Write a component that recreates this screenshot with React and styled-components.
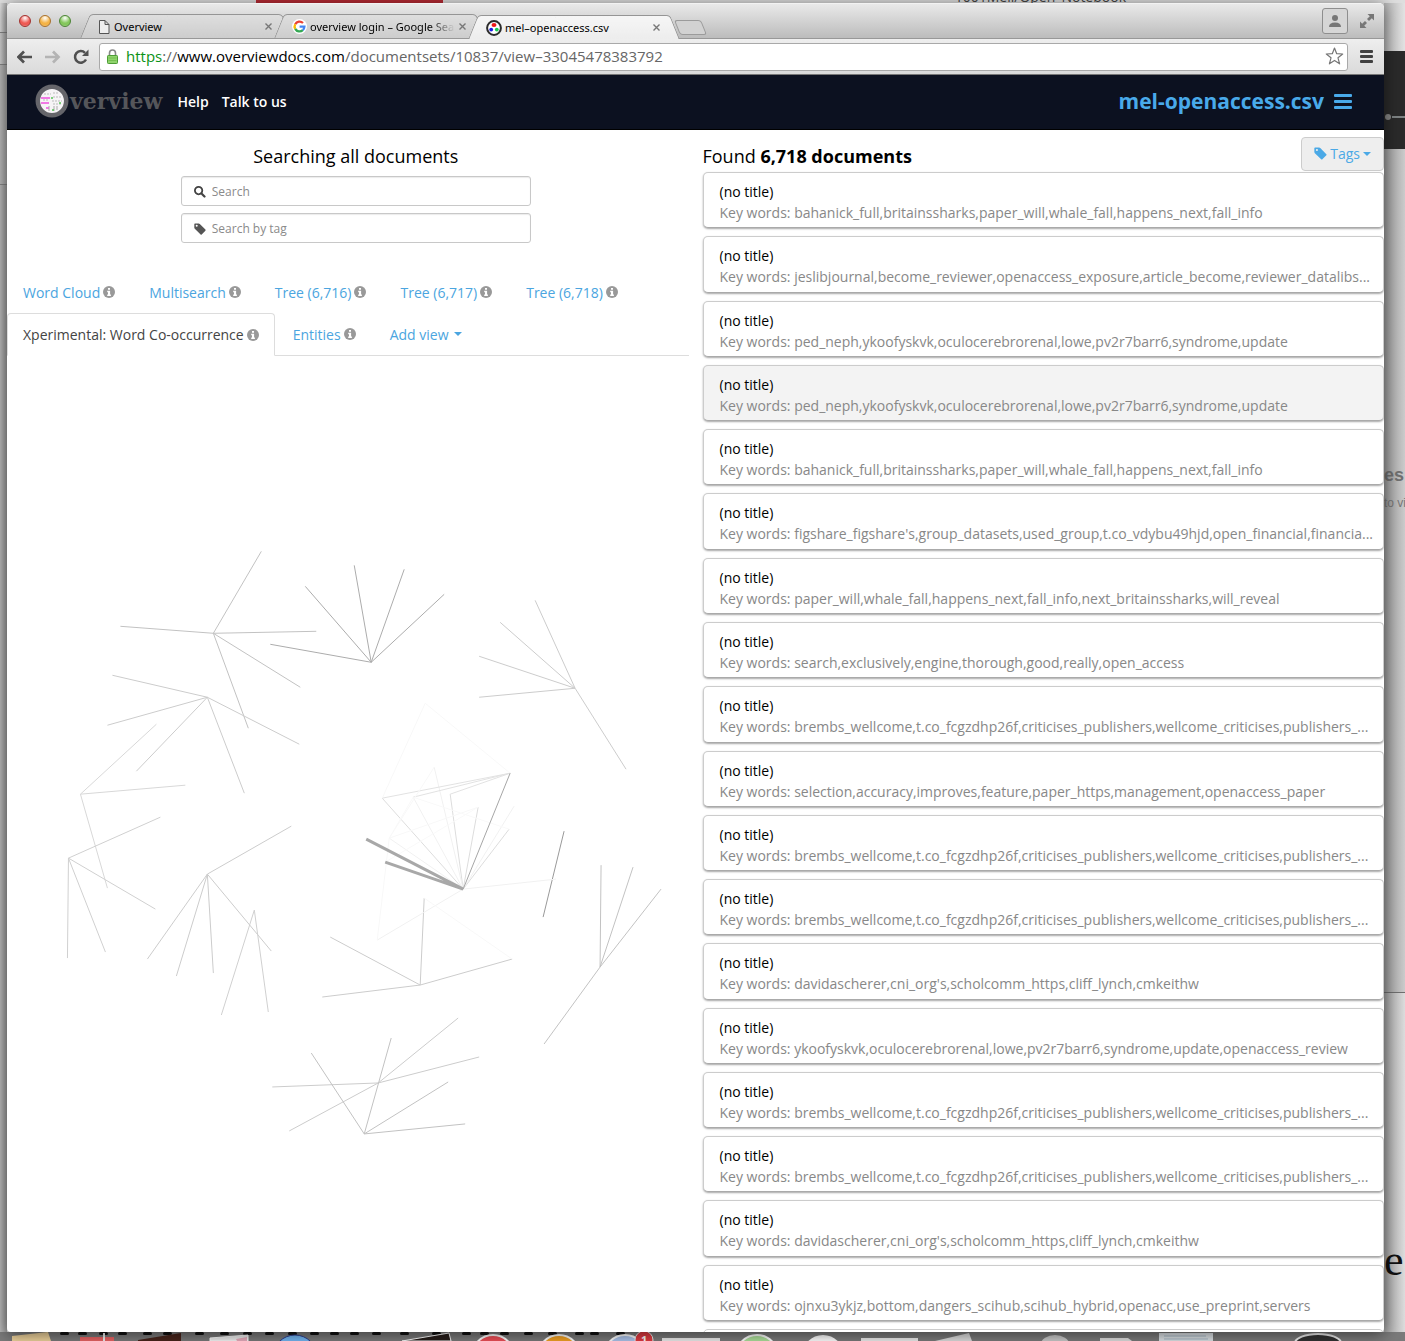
import React from "react";
import styled, { createGlobalStyle, css } from "styled-components";

const GlobalStyle = createGlobalStyle`
  *, *::before, *::after { box-sizing: border-box; }
  body { margin: 0; font: 14px/21px "Open Sans", "Noto Sans", sans-serif; color: #000; }
  h1, h2, h3, p, ul { margin: 0; padding: 0; }
  ul { list-style: none; }
  button { font: inherit; cursor: pointer; }
  a { text-decoration: none; }
`;

const Desktop = styled.div`
  height: 100vh;
  overflow: hidden;
  display: grid;
  grid-template-columns: 7px minmax(0, 1fr) 21px;
  grid-template-rows: 3px minmax(0, 1fr) 9px;
  background: #dcdcdc;
`;

const TopStrip = styled.div`
  grid-column: 1 / -1;
  display: flex;
  align-items: flex-end;
  overflow: hidden;
  background: #dedede;
`;
const RedTab = styled.div`
  width: 187px;
  height: 3px;
  margin-left: 256px;
  background: #b92b35;
`;
const ClippedName = styled.span`
  margin-left: auto;
  margin-right: 279px;
  font-size: 14px;
  line-height: 12px;
  color: #444;
`;

const LeftStrip = styled.div`
  display: flex;
  flex-direction: column;
  background: linear-gradient(90deg, #b8b8b8, #9c9c9c);
`;
const LeftPiece = styled.div`
  height: ${(p) => p.$h}px;
  background: linear-gradient(90deg, ${(p) => p.$c}, #a6a6a6);
  border-bottom: 1px solid #858585;
`;

const RightStrip = styled.div`
  display: flex;
  flex-direction: column;
  overflow: hidden;
`;
const RightPiece = styled.div`
  display: flex;
  flex-direction: column;
  height: ${(p) => p.$h}px;
  flex: ${(p) => (p.$h ? "none" : "1")};
  padding-top: ${(p) => p.$pad || 0}px;
  overflow: hidden;
  background: ${(p) => p.$bg};
  border-bottom: ${(p) => (p.$line ? "1px solid #6e6e6e" : "0")};
`;
const Behind = styled.div`
  flex: none;
  white-space: nowrap;
  color: ${(p) => p.$color};
  font: ${(p) => p.$font};
`;
const SliderTrack = styled.div`
  display: flex;
  align-items: center;
  &::before { content: ""; width: 6px; height: 6px; margin-left: 1px; border-radius: 50%; background: #858585; }
  &::after { content: ""; flex: 1; height: 2px; margin-left: 1px; background: #7d8283; }
`;

const Dock = styled.div`
  grid-column: 1 / -1;
  display: flex;
  background: #7a7a7a;
  svg { display: block; flex: none; }
`;

const Window = styled.div`
  display: flex;
  flex-direction: column;
  min-width: 0;
  overflow: hidden;
  border-radius: 5px 5px 4px 4px;
  background: #fff;
  box-shadow: 0 2px 16px rgba(0, 0, 0, 0.55);
  z-index: 1;
`;

/* ---- browser chrome ---- */
const TitleBar = styled.div`
  display: flex;
  align-items: flex-end;
  height: 36px;
  flex: none;
  padding: 0 10px 0 12px;
  border-top: 1px solid #f2f2f2;
  border-bottom: 1px solid #989898;
  background: linear-gradient(#e9e9e9, #bcbcbc);
`;
const Lights = styled.div`
  display: flex;
  gap: 8px;
  align-self: center;
  margin-right: 18px;
`;
const Light = styled.button`
  width: 12px;
  height: 12px;
  padding: 0;
  border: 1px solid ${(p) => p.$edge};
  border-radius: 50%;
  background: radial-gradient(circle at 50% 20%, #fff 0, ${(p) => p.$fill} 55%, ${(p) => p.$fill} 75%, #fff8 100%);
`;
const BrowserTab = styled.div`
  position: relative;
  display: flex;
  align-items: center;
  gap: 3px;
  width: 194px;
  height: 24px;
  margin-bottom: ${(p) => (p.$active ? "-1px" : "0")};
  padding: 1px 10px 0 9px;
  font: 11px/16px "Noto Sans", "Open Sans", sans-serif;
  color: #000;
  z-index: ${(p) => (p.$active ? 1 : 0)};
  &::before, &::after {
    content: "";
    position: absolute;
    z-index: -1;
    top: 0;
    bottom: 0;
    border-top: 1px solid #959595;
    background: ${(p) => (p.$active ? "linear-gradient(#f6f6f6, #ededed)" : "linear-gradient(#dedede, #cdcdcd)")};
  }
  &::before {
    left: -4px;
    width: 60%;
    border-left: 1px solid #959595;
    border-top-left-radius: 4px;
    transform: skewX(-22deg);
  }
  &::after {
    right: -4px;
    width: 60%;
    border-right: 1px solid #959595;
    border-top-right-radius: 4px;
    transform: skewX(22deg);
  }
  svg { flex: none; }
`;
const TabTitle = styled.span`
  flex: 1;
  overflow: hidden;
  white-space: nowrap;
  mask-image: ${(p) => (p.$fade ? "linear-gradient(90deg, #000 82%, transparent)" : "none")};
`;
const TabClose = styled.button`
  width: 9px;
  height: 9px;
  padding: 0;
  border: 0;
  background: none;
  display: grid;
  place-items: center;
`;
const NewTab = styled.button`
  width: 27px;
  height: 15px;
  margin: 0 0 3px 6px;
  border: 1px solid #9b9b9b;
  border-radius: 3px;
  background: #d2d2d2;
  transform: skewX(22deg);
`;
const TitleActions = styled.div`
  display: flex;
  align-items: center;
  gap: 12px;
  align-self: center;
  margin-left: auto;
`;
const Profile = styled.button`
  display: grid;
  place-items: center;
  width: 26px;
  height: 26px;
  padding: 0;
  border: 1px solid #8e8e8e;
  border-radius: 3px;
  background: #d6d6d6;
`;
const PlainButton = styled.button`
  display: grid;
  place-items: center;
  padding: 0;
  border: 0;
  background: none;
`;
const Toolbar = styled.div`
  display: flex;
  align-items: center;
  gap: 12px;
  height: 36px;
  flex: none;
  padding: 0 11px 0 10px;
  border-bottom: 1px solid #777;
  background: linear-gradient(#eee, #dadada);
`;
const AddressBar = styled.div`
  display: flex;
  align-items: center;
  gap: 8px;
  flex: 1;
  height: 28px;
  margin-left: -3px;
  padding: 0 3px 1px 7px;
  border: 1px solid #a9a9a9;
  border-radius: 3px;
  background: #fff;
  font-size: 15px;
  line-height: 20px;
  color: #666;
  b { font-weight: 400; color: #000; }
  i { font-style: normal; color: #0b9216; }
`;
const Url = styled.span`
  flex: 1;
  overflow: hidden;
  white-space: nowrap;
`;

/* ---- site header ---- */
const SiteHeader = styled.header`
  display: flex;
  align-items: center;
  height: 55px;
  flex: none;
  padding: 0 32px 2px 28px;
  border-bottom: 1px solid #000;
  background: #0c1120;
`;
const Logo = styled.a`
  display: flex;
  align-items: center;
  gap: 1px;
  margin-right: 15px;
  font: bold 22px/26px "DejaVu Serif", "Liberation Serif", serif;
  color: #55565a;
`;
const HeaderLink = styled.a`
  margin-right: 13px;
  color: #fff;
  font-weight: 600;
`;
const SetTitle = styled.h1`
  margin-left: auto;
  font-size: 21px;
  line-height: 28px;
  color: #49aaea;
`;
const MenuButton = styled(PlainButton)`
  margin-left: 10px;
`;

/* ---- page panes ---- */
const Page = styled.main`
  display: grid;
  grid-template-columns: minmax(0, 1fr) minmax(0, 1fr);
  column-gap: 14px;
  flex: 1;
  min-height: 0;
`;
const LeftPane = styled.section`
  display: flex;
  flex-direction: column;
  min-height: 0;
`;
const SearchArea = styled.form`
  display: flex;
  flex-direction: column;
  align-items: center;
  gap: 7px;
  padding: 14px 0 28px 16px;
`;
const Heading = styled.h2`
  font-size: 18px;
  line-height: 25px;
  font-weight: 400;
`;
const Field = styled.label`
  display: flex;
  align-items: center;
  gap: 6px;
  width: 350px;
  height: 30px;
  padding: 2px 12px 0;
  border: 1px solid #c8c8c8;
  border-radius: 3px;
  box-shadow: inset 0 1px 1px rgba(0, 0, 0, 0.08);
  color: #555;
`;
const FieldInput = styled.input`
  flex: 1;
  min-width: 0;
  padding: 0;
  border: 0;
  outline: 0;
  background: none;
  font: 12px/18px "Open Sans", "Noto Sans", sans-serif;
  &::placeholder { color: #8a8a8a; opacity: 1; }
`;
const ViewTabs = styled.nav`
  display: flex;
  flex-wrap: wrap;
  column-gap: 2px;
  border-bottom: 1px solid #ddd;
`;
const viewTab = css`
  display: flex;
  align-items: center;
  gap: 3px;
  height: 42px;
  padding: 0 15px;
  border: 1px solid transparent;
  background: none;
  color: #4ba5e0;
`;
const ViewTab = styled.a`
  ${viewTab}
  ${(p) =>
    p.$active &&
    css`
      height: 43px;
      margin-bottom: -1px;
      border-color: #ddd;
      border-bottom-color: #fff;
      border-radius: 4px 4px 0 0;
      background: #fff;
      color: #444;
    `}
`;
const AddView = styled.button`
  ${viewTab}
  gap: 5px;
`;
const Caret = styled.span`
  border: 4px solid transparent;
  border-top-color: currentColor;
  border-bottom: 0;
`;
const Graph = styled.svg`
  display: block;
  flex: 1;
  width: 100%;
  min-height: 0;
`;
const RightPane = styled.section`
  display: flex;
  flex-direction: column;
  min-height: 0;
`;
const ResultsHeader = styled.div`
  display: flex;
  align-items: flex-start;
  justify-content: space-between;
  height: 42px;
  flex: none;
  padding-top: 7px;
  ${Heading} { margin-top: 7px; }
`;
const TagsButton = styled.button`
  display: flex;
  align-items: center;
  gap: 3px;
  height: 34px;
  padding: 0 12px 1px;
  border: 1px solid #ccc;
  border-radius: 4px;
  background: #eee;
  color: #4ba9e6;
`;
const Documents = styled.ul`
  display: grid;
  grid-template-columns: minmax(0, 1fr);
  grid-template-rows: repeat(18, minmax(0, 1fr)) 3px;
  row-gap: 8px;
  flex: 1;
  min-height: 0;
`;
const DocumentItem = styled.li`
  min-height: 0;
  padding: 8px 8px 8px 16px;
  border: 1px solid #ccc;
  border-bottom-color: #aaa;
  border-radius: 5px;
  box-shadow: 0 1px 2px rgba(0, 0, 0, 0.35);
  background: ${(p) => (p.$selected ? "#f3f3f3" : "#fff")};
`;
const DocTitle = styled.h3`
  font-size: 14px;
  line-height: 21px;
  font-weight: 400;
`;
const Keywords = styled.p`
  overflow: hidden;
  text-overflow: ellipsis;
  white-space: nowrap;
  color: #888;
`;
const DocumentEdge = styled.li`
  height: 12px;
  border: 1px solid #ccc;
  border-radius: 5px;
`;

const SearchIcon = () => (
  <svg width="12" height="12" viewBox="0 0 12 12" fill="none" stroke="#444" strokeWidth="1.8">
    <circle cx="4.600" cy="4.600" r="3.700" />
    <path d="M7.500 7.500 10.500 10.500" strokeWidth="2.200" strokeLinecap="round" />
  </svg>
);
const TagIcon = ({ size = 12 }) => (
  <svg width={size} height={size} viewBox="0 0 12 12" fill="currentColor">
    <path fillRule="evenodd" d="M.3 1.2Q.3.5 1 .5h3.7q.6 0 1.1.5l5.6 5.6q.5.6 0 1.1l-3.7 3.7q-.5.5-1.1 0L.8 5.8Q.3 5.3.3 4.700zM2.700 1.800a1 1 0 1 0 0 2 1 1 0 0 0 0-2z" />
  </svg>
);
const InfoIcon = () => (
  <svg width="12" height="12" viewBox="0 0 12 12">
    <circle cx="6" cy="6" r="6" fill="#999" />
    <path d="M5 2h2v1.700H5zM4.200 4.800h2.900v3.700h.8V10H4.200V8.500H5V6.200h-.8z" fill="#fff" />
  </svg>
);
const CloseIcon = () => (
  <svg width="9" height="9" viewBox="0 0 9 9" stroke="#777" strokeWidth="1.4">
    <path d="m1.500 1.500 6 6m0-6-6 6" />
  </svg>
);
const PageIcon = () => (
  <svg width="13" height="14" viewBox="0 0 13 14" fill="#eee" stroke="#555">
    <path d="M1.500.500H7l4 4v9H1.500zM7 .500v4h4" />
  </svg>
);
const GoogleIcon = () => (
  <svg width="15" height="15" viewBox="0 0 15 15" fill="none" strokeWidth="2.300">
    <circle cx="7.500" cy="7.500" r="7.500" fill="#fff" />
    <path d="M11 4A4.900 4.900 0 0 0 3.200 5.200" stroke="#ea4335" />
    <path d="M3.200 5.200a4.900 4.900 0 0 0 0 4.700" stroke="#fbbc05" />
    <path d="M3.200 9.900a4.900 4.900 0 0 0 7.600 1.200" stroke="#34a853" />
    <path d="M10.800 11.100a4.900 4.900 0 0 0 1.600-3.400H7.600" stroke="#4285f4" />
  </svg>
);
const CsvIcon = () => (
  <svg width="16" height="16" viewBox="0 0 16 16">
    <circle cx="8" cy="8" r="6.900" fill="#fff" stroke="#2b2b2b" strokeWidth="2" />
    <ellipse cx="8" cy="5" rx="2.500" ry="1.900" fill="#f01818" />
    <circle cx="5.200" cy="9.600" r="1.900" fill="#1818e8" />
    <circle cx="10.800" cy="9.600" r="1.900" fill="#18c850" />
  </svg>
);
const Arrow = ({ color, flip }) => (
  <svg width="16" height="14" viewBox="0 0 16 14" fill="none" stroke={color} strokeWidth="2.700">
    <path d={flip ? "M0 7h13M8 1.500 13.500 7 8 12.500" : "M15 7H2M7 1.500 1.500 7 7 12.500"} />
  </svg>
);
const ReloadIcon = () => (
  <svg width="17" height="16" viewBox="0 0 17 16">
    <path d="M12 3.800A5.800 5.800 0 1 0 13 10.500" fill="none" stroke="#505050" strokeWidth="2.500" />
    <path d="M15.500.500v6.500H9z" fill="#505050" />
  </svg>
);
const LockIcon = () => (
  <svg width="11" height="15" viewBox="0 0 11 15">
    <path d="M2.500 7V4a3 3 0 0 1 6 0v3" fill="none" stroke="#888" strokeWidth="1.600" />
    <rect x=".5" y="6.500" width="10" height="8" rx=".8" fill="#8fd36c" stroke="#4d9c36" />
    <path d="M1.500 9h8M1.500 11.500h8" stroke="#74be50" />
  </svg>
);
const StarIcon = () => (
  <svg width="19" height="18" viewBox="0 0 19 18" fill="#fff" stroke="#777" strokeWidth="1.200" strokeLinejoin="round">
    <path d="m9.500 1 2.200 5.700 6 .3-4.700 3.800 1.600 6-5.100-3.400-5.100 3.400 1.600-6L1.300 7l6-.3z" />
  </svg>
);
const PersonIcon = () => (
  <svg width="12" height="12" viewBox="0 0 12 12" fill="#777">
    <circle cx="6" cy="3" r="3" />
    <path d="M0 12c0-3 2-4.500 6-4.500s6 1.500 6 4.500z" />
  </svg>
);
const ExpandIcon = () => (
  <svg width="14" height="14" viewBox="0 0 14 14" fill="#777">
    <path d="M7.500 0H14v6.500l-2.200-2.200L9 7 7 5l2.800-2.800zM6.500 14H0V7.500l2.200 2.200L5 7l2 2-2.800 2.800z" />
  </svg>
);
const Bars = ({ color, w, h, gap, t }) => (
  <svg width={w} height={h}>
    {[0, 1, 2].map((i) => (
      <rect key={i} y={i * gap} width={w} height={t} rx="1" fill={color} />
    ))}
  </svg>
);
const LogoMark = () => (
  <svg width="34" height="34" viewBox="0 0 34 34">
    <circle cx="17" cy="17" r="14.200" fill="#f6f4f6" stroke="#65656a" strokeWidth="4.500" />
    <path d="M6 14h9M6 19h8M11 24h3" stroke="#ef52e0" strokeWidth="1.300" />
    <path d="M9 10h7M18 9h6M18 13h9M17 17h10M8 16h6M18 20h8" stroke="#bbb" strokeDasharray="2 1" />
    <path d="M14 22v5M19 22v5M22 22v4" stroke="#aaa" />
    <path d="M16 14h2M24 19h2M17 26h2" stroke="#55c455" strokeWidth="1.300" />
  </svg>
);

const fans = [
  [213, 633, "#c2c2c2", [[261, 551], [120, 626], [316, 631], [300, 687], [248, 728]]],
  [371, 662, "#acacac", [[305, 586], [354, 565], [404, 569], [444, 594], [270, 644]]],
  [207, 697, "#cccccc", [[112, 675], [107, 725], [136, 771], [244, 793], [299, 744]]],
  [80, 794, "#d8d8d8", [[156, 724], [185, 785], [107, 888]]],
  [68, 858, "#d0d0d0", [[160, 817], [155, 909], [105, 952], [67, 958]]],
  [207, 874, "#cccccc", [[291, 826], [147, 959], [176, 976], [213, 973], [271, 951]]],
  [254, 910, "#d0d0d0", [[221, 1015], [268, 1012]]],
  [575, 688, "#cccccc", [[535, 600], [500, 622], [479, 656], [479, 697], [626, 769]]],
  [420, 985, "#cccccc", [[330, 937], [424, 898], [322, 997], [512, 959]]],
  [600, 967, "#c2c2c2", [[601, 865], [633, 867], [661, 889], [544, 1044]]],
  [378, 1083, "#cccccc", [[458, 1018], [479, 1057], [272, 1087], [289, 1131]]],
  [364, 1134, "#c2c2c2", [[311, 1053], [391, 1038], [448, 1082], [465, 1124]]],
  [543, 917, "#999999", [[564, 831]]],
  [463, 889, "#dddddd", [[382, 798], [450, 794], [478, 807], [509, 829]]],
  [463, 889, "#f1f1f1", [[434, 767], [413, 797], [389, 838], [514, 806], [556, 879], [377, 940]]],
  [510, 773, "#e2e2e2", [[382, 798], [413, 797], [450, 794]]],
  [425, 703, "#f8f8f8", [[510, 773], [382, 798]]],
  [389, 838, "#f8f8f8", [[377, 940], [478, 807], [434, 767]]],
  [413, 797, "#f9f9f9", [[509, 829], [389, 838]]],
  [385, 862, "#f9f9f9", [[478, 807]]],
  [424, 898, "#f8f8f8", [[512, 959]]],
  [463, 889, "#a6a6a6", [[510, 773]]],
];

const britain = "bahanick_full,britainssharks,paper_will,whale_fall,happens_next,fall_info";
const lowe = "ped_neph,ykoofyskvk,oculocerebrorenal,lowe,pv2r7barr6,syndrome,update";
const brembs = "brembs_wellcome,t.co_fcgzdhp26f,criticises_publishers,wellcome_criticises,publishers_...";
const david = "davidascherer,cni_org's,scholcomm_https,cliff_lynch,cmkeithw";
const documents = [
  britain,
  "jeslibjournal,become_reviewer,openaccess_exposure,article_become,reviewer_datalibs...",
  lowe,
  lowe,
  britain,
  "figshare_figshare's,group_datasets,used_group,t.co_vdybu49hjd,open_financial,financia...",
  "paper_will,whale_fall,happens_next,fall_info,next_britainssharks,will_reveal",
  "search,exclusively,engine,thorough,good,really,open_access",
  brembs,
  "selection,accuracy,improves,feature,paper_https,management,openaccess_paper",
  brembs,
  brembs,
  david,
  "ykoofyskvk,oculocerebrorenal,lowe,pv2r7barr6,syndrome,update,openaccess_review",
  brembs,
  brembs,
  david,
  "ojnxu3ykjz,bottom,dangers_scihub,scihub_hybrid,openacc,use_preprint,servers",
];
const views = ["Word Cloud", "Multisearch", "Tree (6,716)", "Tree (6,717)", "Tree (6,718)", "Xperimental: Word Co-occurrence", "Entities"];

const DockIcons = () => (
  <svg width="1405" height="9" viewBox="0 1332 1405 9">
    <g fill="#111">
      {[60, 78, 99, 118, 143, 163, 195, 220, 243, 265, 288, 310, 330, 350, 372, 400, 432, 462, 480, 500, 524, 548, 575, 590, 616].map((x) => (
        <rect key={x} x={x} y="1332" width="9" height="3" rx="1.500" />
      ))}
    </g>
    <path d="m12 1336 36-4 3 9H12z" fill="#ecd19a" />
    <path d="M80 1341v-4h34v4z" fill="#ea6464" />
    <path d="M104 1333v8" stroke="#eee" strokeWidth="2" />
    <path d="m138 1340 43-7v8h-43z" fill="#4a251c" />
    <path d="m210 1338 38-3v6h-38z" fill="#eee" stroke="#fff" />
    <path d="m236 1339 11-2v4h-10z" fill="#e9aebe" />
    <circle cx="295" cy="1357" r="22" fill="#74b7f4" stroke="#2c3e90" />
    <path d="m402 1341 47-8 2 8z" fill="#281e1b" stroke="#fff" />
    <circle cx="493" cy="1356" r="21" fill="#f05058" stroke="#fff" strokeWidth="2" />
    <circle cx="559" cy="1356" r="21" fill="#f4a324" stroke="#fff" strokeWidth="2" />
    <circle cx="625" cy="1356" r="21" fill="#adc5ed" stroke="#fff" strokeWidth="2" />
    <circle cx="644" cy="1340" r="9" fill="#e23b41" stroke="#eee" />
    <text x="641" y="1344" fontSize="11" fontWeight="700" fill="#fff">1</text>
    <path d="M662 1338h58v3h-58zM861 1338h57v3h-57z" fill="#ececec" />
    <circle cx="757" cy="1356" r="21" fill="#aee19c" stroke="#fff" strokeWidth="2" />
    <circle cx="823" cy="1356" r="21" fill="#fff" />
    <path d="m935 1341 34-8 3 8z" fill="#ddd" />
    <ellipse cx="1055" cy="1344" rx="14" ry="9" fill="#c9c9c9" />
    <path d="M1100 1338h28l4 3h-32z" fill="#dedede" />
    <path d="M1159 1333h54v8h-54z" fill="#dce2e6" />
    <path d="M1164 1336h42M1164 1339h44" stroke="#a8b9c6" />
    <ellipse cx="1318" cy="1343" rx="23" ry="9" fill="#333" stroke="#eee" strokeWidth="2" />
  </svg>
);

export default function App() {
  return (
    <>
      <GlobalStyle />
      <Desktop>
        <TopStrip>
          <RedTab />
          <ClippedName>1001Mell/Open_Notebook</ClippedName>
        </TopStrip>
        <LeftStrip>
          <LeftPiece $h={30} $c="#dcdcdc" />
          <LeftPiece $h={32} $c="#cfcfcf" />
          <LeftPiece $h={120} $c="#b8b8b8" />
        </LeftStrip>
        <Window>
          <TitleBar>
            <Lights>
              <Light aria-label="Close" $fill="#ee5a54" $edge="#a3302d" />
              <Light aria-label="Minimise" $fill="#f4b346" $edge="#a9702a" />
              <Light aria-label="Zoom" $fill="#84c75c" $edge="#4b8434" />
            </Lights>
            <BrowserTab>
              <PageIcon />
              <TabTitle>Overview</TabTitle>
              <TabClose aria-label="Close tab"><CloseIcon /></TabClose>
            </BrowserTab>
            <BrowserTab>
              <GoogleIcon />
              <TabTitle $fade>overview login – Google Search</TabTitle>
              <TabClose aria-label="Close tab"><CloseIcon /></TabClose>
            </BrowserTab>
            <BrowserTab $active>
              <CsvIcon />
              <TabTitle>mel–openaccess.csv</TabTitle>
              <TabClose aria-label="Close tab"><CloseIcon /></TabClose>
            </BrowserTab>
            <NewTab aria-label="New tab" />
            <TitleActions>
              <Profile aria-label="Profile"><PersonIcon /></Profile>
              <PlainButton aria-label="Full screen"><ExpandIcon /></PlainButton>
            </TitleActions>
          </TitleBar>
          <Toolbar>
            <PlainButton aria-label="Back"><Arrow color="#505050" /></PlainButton>
            <PlainButton aria-label="Forward"><Arrow color="#b4b4b4" flip /></PlainButton>
            <PlainButton aria-label="Reload"><ReloadIcon /></PlainButton>
            <AddressBar>
              <LockIcon />
              <Url><i>https</i>://<b>www.overviewdocs.com</b>/documentsets/10837/view–33045478383792</Url>
              <PlainButton aria-label="Bookmark"><StarIcon /></PlainButton>
            </AddressBar>
            <PlainButton aria-label="Menu"><Bars color="#404040" w={13} h={13} gap={5} t={3} /></PlainButton>
          </Toolbar>
          <SiteHeader>
            <Logo href="#"><LogoMark />verview</Logo>
            <HeaderLink href="#">Help</HeaderLink>
            <HeaderLink href="#">Talk to us</HeaderLink>
            <SetTitle>mel-openaccess.csv</SetTitle>
            <MenuButton aria-label="Document set menu"><Bars color="#49aaea" w={18} h={15} gap={6} t={3} /></MenuButton>
          </SiteHeader>
          <Page>
            <LeftPane>
              <SearchArea>
                <Heading>Searching all documents</Heading>
                <Field>
                  <SearchIcon />
                  <FieldInput aria-label="Search" placeholder="Search" />
                </Field>
                <Field>
                  <TagIcon />
                  <FieldInput aria-label="Search by tag" placeholder="Search by tag" />
                </Field>
              </SearchArea>
              <ViewTabs>
                {views.map((v, i) => (
                  <ViewTab key={v} href="#" $active={i === 5}>{v}<InfoIcon /></ViewTab>
                ))}
                <AddView>Add view <Caret /></AddView>
              </ViewTabs>
              <Graph viewBox="6.5 355.5 682 976" preserveAspectRatio="xMinYMin meet" aria-label="Word co-occurrence graph">
                {fans.map(([x, y, color, ends]) =>
                  ends.map(([ex, ey]) => (
                    <line key={`${x}-${y}-${ex}-${ey}`} x1={x} y1={y} x2={ex} y2={ey} stroke={color} />
                  ))
                )}
                <path d="M366 839 463 889 385 862" fill="none" stroke="#a8a8a8" strokeWidth="3" />
              </Graph>
            </LeftPane>
            <RightPane>
              <ResultsHeader>
                <Heading>Found <b>6,718 documents</b></Heading>
                <TagsButton><TagIcon size={13} />Tags<Caret /></TagsButton>
              </ResultsHeader>
              <Documents>
                {documents.map((words, i) => (
                  <DocumentItem key={i} $selected={i === 3}>
                    <DocTitle>(no title)</DocTitle>
                    <Keywords>Key words: {words}</Keywords>
                  </DocumentItem>
                ))}
                <DocumentEdge />
              </Documents>
            </RightPane>
          </Page>
        </Window>
        <RightStrip>
          <RightPiece $h={48} $bg="linear-gradient(90deg, #b5b5b5, #e2e2e2)" />
          <RightPiece $h={98} $pad={63} $bg="#2a2a2a"><SliderTrack /></RightPiece>
          <RightPiece $h={844} $pad={312} $line $bg="linear-gradient(90deg, #999, #cbcbcb)">
            <Behind $color="#707070" $font='bold 18px/28px "Liberation Sans", sans-serif'>es</Behind>
            <Behind $color="#777" $font='12px/28px "Liberation Sans", sans-serif'>to vi</Behind>
          </RightPiece>
          <RightPiece $pad={238} $bg="linear-gradient(90deg, #a0a0a0, #dcdcdc)">
            <Behind $color="#111" $font='44px/60px "Liberation Serif", serif'>e</Behind>
          </RightPiece>
        </RightStrip>
        <Dock><DockIcons /></Dock>
      </Desktop>
    </>
  );
}
